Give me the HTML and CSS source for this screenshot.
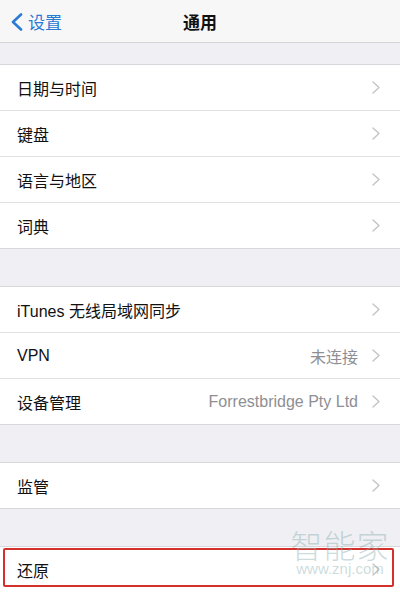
FILE: index.html
```html
<!DOCTYPE html>
<html lang="zh-CN">
<head>
  <meta charset="UTF-8">
  <meta name="viewport" content="width=device-width, initial-scale=1.0">
  <title>通用</title>
  <link rel="stylesheet" href="styles.css">
</head>
<body>

<div class="navbar">
  <a class="back">
    <svg class="back-icon" width="14" height="18" viewBox="0 0 14 18">
      <path d="M11 1.5 L3 9 L11 16.5" fill="none" stroke="#2a7bd3" stroke-width="2.6" stroke-linecap="round" stroke-linejoin="round"/>
    </svg>
    <span>设置</span>
  </a>
  <div class="title">通用</div>
</div>

<!-- Groupe 1 -->
<div class="group first">
  <div class="row"><span class="label">日期与时间</span><svg class="chev" viewBox="0 0 8 13"><path d="M1 1 L7 6.5 L1 12"/></svg></div>
  <div class="row"><span class="label">键盘</span><svg class="chev" viewBox="0 0 8 13"><path d="M1 1 L7 6.5 L1 12"/></svg></div>
  <div class="row"><span class="label">语言与地区</span><svg class="chev" viewBox="0 0 8 13"><path d="M1 1 L7 6.5 L1 12"/></svg></div>
  <div class="row"><span class="label">词典</span><svg class="chev" viewBox="0 0 8 13"><path d="M1 1 L7 6.5 L1 12"/></svg></div>
</div>

<!-- Groupe 2 -->
<div class="group">
  <div class="row"><span class="label">iTunes 无线局域网同步</span><svg class="chev" viewBox="0 0 8 13"><path d="M1 1 L7 6.5 L1 12"/></svg></div>
  <div class="row"><span class="label">VPN</span><span class="value">未连接</span><svg class="chev" viewBox="0 0 8 13"><path d="M1 1 L7 6.5 L1 12"/></svg></div>
  <div class="row"><span class="label">设备管理</span><span class="value">Forrestbridge Pty Ltd</span><svg class="chev" viewBox="0 0 8 13"><path d="M1 1 L7 6.5 L1 12"/></svg></div>
</div>

<div class="group">
  <div class="row"><span class="label">监管</span><svg class="chev" viewBox="0 0 8 13"><path d="M1 1 L7 6.5 L1 12"/></svg></div>
</div>

<div class="group reset">
  <div class="row"><span class="label">还原</span><svg class="chev" viewBox="0 0 8 13"><path d="M1 1 L7 6.5 L1 12"/></svg></div>
  <div class="highlight"></div>
</div>

<!-- filigrane -->
<div class="watermark">
  <div class="wm-big">智能家</div>
  <div class="wm-small">www.znj.com</div>
</div>

</body>
</html>
```

FILE: styles.css
```css
body {
  margin: 0;
  background-color: #efeff4;
  font-family: "Liberation Sans", "Noto Sans CJK SC", sans-serif;
  color: #111;
  width: 400px;
  height: 592px;
  overflow: hidden;
  position: relative;
}

/* Barre de navigation */
.navbar {
  height: 42px;
  background-color: #f7f7f8;
  border-bottom: 1px solid #d6d6da;
  display: flex;
  align-items: center;
  justify-content: center;
  position: relative;
}

.back {
  position: absolute;
  left: 10px;
  top: 0;
  height: 42px;
  display: flex;
  align-items: center;
  gap: 4px;
  color: #2a7bd3;
  font-size: 17px;
}

.back-icon {
  display: block;
  margin-top: 1px;
}

.title {
  font-size: 17px;
  font-weight: bold;
  color: #111;
}

/* Groupes de cellules */
.group {
  background-color: #fff;
  border-top: 1px solid #d8d8dc;
  border-bottom: 1px solid #d8d8dc;
  margin-top: 37px;
  position: relative;
}

.group.first {
  margin-top: 21px;
}

.row {
  height: 45px;
  display: flex;
  align-items: center;
  padding: 0 20px 0 17px;
  font-size: 16px;
  position: relative;
}

.row + .row {
  border-top: 1px solid #e2e2e5;
}

.label {
  flex: 1;
}

.value {
  color: #8e8e93;
  margin-right: 14px;
}

.chev {
  width: 8px;
  height: 13px;
  fill: none;
  stroke: #c4c4c8;
  stroke-width: 1.4;
  stroke-linecap: round;
  stroke-linejoin: round;
}

/* Cadre rouge */
.highlight {
  position: absolute;
  left: 3px;
  right: 6px;
  top: 1px;
  height: 35px;
  border: 2px solid #d4302c;
  border-radius: 2px;
}

/* Filigrane */
.watermark {
  position: absolute;
  left: 289px;
  top: 527px;
  width: 102px;
  text-align: center;
  color: rgba(140, 175, 175, 0.45);
  pointer-events: none;
}

.wm-big {
  font-family: "Noto Sans CJK SC", sans-serif;
  font-weight: 300;
  font-size: 32px;
  line-height: 34px;
  letter-spacing: 1px;
}

.wm-small {
  font-family: "Liberation Sans", sans-serif;
  font-size: 15px;
  line-height: 16px;
}
```
